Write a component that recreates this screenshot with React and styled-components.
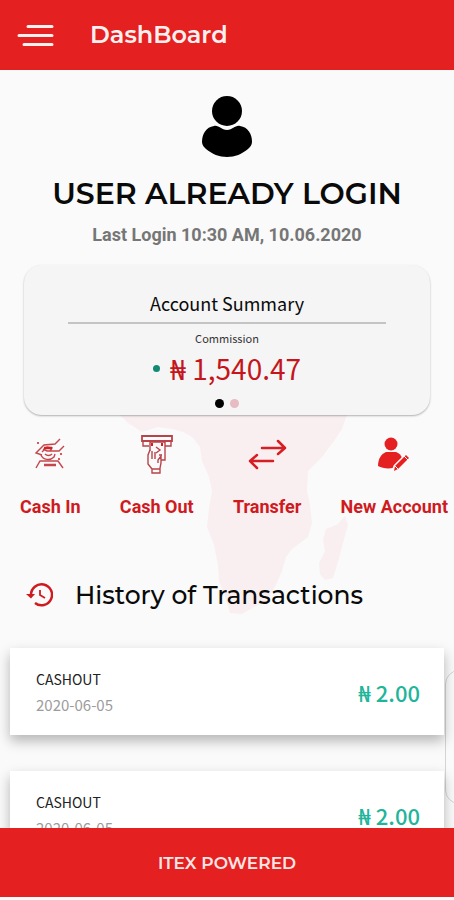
/*
 * Dashboard
 *
 * Agent landing page: profile, account summary, quick actions and history
 */

import React from 'react';
import styled, { createGlobalStyle } from 'styled-components';

const heading = "'Montserrat', 'Inter', sans-serif";
const body = "'Noto Sans CJK SC', 'Noto Sans', sans-serif";
const label = "'Roboto', sans-serif";

const red = '#e42020';

const GlobalStyle = createGlobalStyle`
  * {
    box-sizing: border-box;
  }
  body {
    margin: 0;
    background: #fafafa;
    color: #0a0a0a;
  }
  h1, h2, p, ul {
    margin: 0;
    padding: 0;
  }
  button {
    border: 0;
    padding: 0;
    background: none;
    cursor: pointer;
  }
  svg {
    display: block;
  }
`;

const Page = styled.div`
  display: flex;
  flex-direction: column;
  height: 100vh;
  padding-bottom: 3px;
  overflow: hidden;
`;

const Header = styled.header`
  display: flex;
  align-items: center;
  flex: none;
  gap: 36px;
  height: 70px;
  padding: 0 16px;
  background: ${red};
`;

const HeaderTitle = styled.div`
  font: 600 24px/32px ${heading};
  color: #fff0f0;
`;

const Main = styled.main`
  position: relative;
  flex: 1;
  min-height: 0;
  overflow: hidden;
`;

const Profile = styled.section`
  display: flex;
  flex-direction: column;
  align-items: center;
  padding-top: 24px;
  text-align: center;
`;

const UserName = styled.h1`
  margin-top: 16px;
  font: 600 30px/40px ${heading};
  white-space: nowrap;
`;

const LastLogin = styled.p`
  margin-top: 8px;
  font: 700 18px/26px ${label};
  color: #767676;
`;

const Summary = styled.section`
  position: relative;
  z-index: 1;
  display: flex;
  flex-direction: column;
  align-items: center;
  height: 150px;
  margin: 17px 24px 0;
  padding: 24px 44px 0;
  border-radius: 18px;
  background: #f5f5f5;
  box-shadow: 0 1px 2px rgba(0, 0, 0, 0.3);
`;

const SummaryTitle = styled.h2`
  width: 100%;
  padding-bottom: 5px;
  border-bottom: 2px solid #c4c4c4;
  font: 400 18px/28px ${body};
  text-align: center;
`;

const SummaryLabel = styled.p`
  margin-top: 4px;
  font: 400 11px/20px ${body};
  color: #333;
`;

const Amount = styled.p`
  display: flex;
  align-items: center;
  gap: 10px;
  font: 400 28px/40px ${body};
  color: #c4161c;

  &::before {
    content: '';
    width: 7px;
    height: 7px;
    border-radius: 50%;
    background: #128a72;
  }
`;

const Dots = styled.div`
  display: flex;
  gap: 6px;
  margin-top: 11px;
`;

const Dot = styled.button`
  width: 9px;
  height: 9px;
  border-radius: 50%;
  background: ${props => (props.$active ? '#000' : '#e6bcc2')};
`;

const Actions = styled.section`
  position: relative;
  display: flex;
  justify-content: space-between;
  padding: 20px 6px 0 20px;
`;

const Action = styled.button`
  position: relative;
  display: flex;
  flex-direction: column;
  align-items: center;
  gap: 22px;
  font: 700 18px/20px ${label};
  color: #cf1a1f;
  white-space: nowrap;
`;

// sits behind the actions and the history title
const Map = styled.svg`
  position: absolute;
  top: 0;
  left: 50%;
  margin-left: -107px;
  fill: #f9eff0;
`;

const HistoryHeader = styled.div`
  position: relative;
  display: flex;
  align-items: center;
  gap: 22px;
  margin-top: 58px;
  padding: 0 26px;
`;

const HistoryTitle = styled.h2`
  font: 500 25px/40px ${heading};
`;

const List = styled.ul`
  position: relative;
  z-index: 1;
  display: flex;
  flex-direction: column;
  gap: 36px;
  margin-top: 33px;
  padding: 0 10px;
  list-style: none;
`;

const Item = styled.li`
  display: flex;
  align-items: center;
  justify-content: space-between;
  height: 87px;
  padding: 0 24px 0 26px;
  background: #fff;
  box-shadow: 0 6px 12px rgba(0, 0, 0, 0.28);
`;

const ItemName = styled.div`
  font: 400 14px/26px ${body};
  color: #222;
`;

const ItemDate = styled.div`
  font: 400 15px/26px ${body};
  color: #9c9c9c;
`;

const ItemAmount = styled.div`
  font: 500 22px/32px ${body};
  color: #1fb59b;
`;

const EdgeTab = styled.div`
  position: absolute;
  right: -20px;
  bottom: 24px;
  width: 29px;
  height: 134px;
  border: 1px solid #d4d4d4;
  border-radius: 14px;
  background: #fafafa;
`;

const Footer = styled.footer`
  flex: none;
  height: 69px;
  background: ${red};
  font: 600 17px/70px ${heading};
  color: #ffe6e6;
  text-align: center;
`;

const MenuIcon = () => (
  <svg width="38" height="24" viewBox="0 0 38 24" stroke="#fff0f0" strokeWidth="3" strokeLinecap="round">
    <path d="M12 3.500H36M3 12.500H36M8 21.500H36" />
  </svg>
);

const UserIcon = () => (
  <svg width="52" height="64" viewBox="0 0 52 64">
    <circle cx="26" cy="17" r="15" />
    <path d="M13 32c5-1 7 4 13 4s8-5 13-4c8 1 12 8 12 16 0 3-2 5-4 7-6 5-13 8-21 8s-15-3-21-8c-2-2-4-4-4-7 0-8 4-15 12-16z" />
  </svg>
);

const CashInIcon = () => (
  <svg width="34" height="40" viewBox="0 0 34 40" fill="none" stroke="#c4474d" strokeWidth="1.400">
    <path d="M27 4l-5 5-11 1-8 8 6 2" />
    <path d="M31 11l-5 5H14l-4-2M9 17l5-5 5 1-2 3" />
    <path d="M8 20c2 5 9 6 13 2l1-3M12 19c2 2 5 2 7 0" />
    <path d="M3 33l4-7h18l5 7" />
    <path d="M11 30h12" strokeWidth="2.500" />
    <path d="M11 13h8" stroke="#d61f24" strokeWidth="2.500" />
    <path d="M5 7v2M28 18v2M25 24h2" stroke="#d61f24" strokeWidth="1.500" />
  </svg>
);

const CashOutIcon = () => (
  <svg width="34" height="40" viewBox="0 0 34 40" fill="none" stroke="#b8444a" strokeWidth="1.400">
    <path d="M2 1h30v5H2z" strokeWidth="1.800" />
    <path d="M3 6v5h6M31 6v5h-6" />
    <path d="M10 7h15v18h-4M10 7v9M16 12l4 3-4 3M19 20h3" />
    <path d="M12 8v3M22 8v3" stroke="#d61f24" strokeWidth="2" />
    <path d="M10 15l-2 5v9l4 5v4h8v-5l1-5v-7l-3 4v3M12 34h8M12 16v8M15 17v7" />
  </svg>
);

const TransferIcon = () => (
  <svg width="40" height="40" viewBox="0 0 40 40" fill="none" stroke="#d61f24" strokeWidth="2.500" strokeLinecap="round" strokeLinejoin="round">
    <path d="M15 13H38M31 6l7 7-7 6M26 26H3M10 20l-7 6 7 7" />
  </svg>
);

const NewAccountIcon = () => (
  <svg width="34" height="40" viewBox="0 0 34 40" fill={red}>
    <circle cx="14" cy="9" r="6.500" />
    <path d="M1 31c0-7 3-12 8-14h10c3 1 5 3 6 6L16 33c-6 1-11 0-15-2z" />
    <path d="M16 36l2-5L29 20l3 3-11 11z" stroke="#fafafa" strokeWidth="3" strokeLinejoin="round" />
    <path d="M17 36l1-5L29 20l3 3-11 11z" />
    <path d="M27 21l4 4M18 31l3 3" stroke="#fafafa" />
  </svg>
);

const HistoryIcon = () => (
  <svg width="27" height="28" viewBox="0 0 27 28" fill="none" stroke="#cf1a1f" strokeWidth="2.500">
    <path d="M5 14a10.500 10.500 0 1 1 4 8" />
    <path d="M0 13h9l-4 4.500z" fill="#cf1a1f" stroke="none" />
    <path d="M14 9v5l5 3" strokeWidth="1.800" />
  </svg>
);

const actions = [
  { name: 'Cash In', icon: <CashInIcon /> },
  { name: 'Cash Out', icon: <CashOutIcon /> },
  { name: 'Transfer', icon: <TransferIcon /> },
  { name: 'New Account', icon: <NewAccountIcon /> },
];

const transactions = [
  { id: 1, name: 'CASHOUT', date: '2020-06-05', amount: '2.00' },
  { id: 2, name: 'CASHOUT', date: '2020-06-05', amount: '2.00' },
];

export default function App() {
  return (
    <Page>
      <GlobalStyle />
      <Header>
        <button aria-label="Menu"><MenuIcon /></button>
        <HeaderTitle>DashBoard</HeaderTitle>
      </Header>
      <Main>
        <Profile>
          <UserIcon />
          <UserName>USER ALREADY LOGIN</UserName>
          <LastLogin>Last Login 10:30 AM, 10.06.2020</LastLogin>
        </Profile>
        <Summary>
          <SummaryTitle>Account Summary</SummaryTitle>
          <SummaryLabel>Commission</SummaryLabel>
          <Amount>₦ 1,540.47</Amount>
          <Dots>
            <Dot $active aria-label="Commission" />
            <Dot aria-label="Next account" />
          </Dots>
        </Summary>
        <Actions>
          <Map width="230" height="200" viewBox="0 0 230 200">
            <path d="M0 0L8 8 22 17 38 12 52 14 63 17 72 22 80 32 82 46 89 62 92 76 89 94 87 112 94 130 98 150 99 166 105 182 110 198 122 199 134 192 146 186 156 170 162 156 166 142 172 134 188 122 192 108 190 90 187 76 188 56 202 42 214 26 222 14 227 0z" />
            <path d="M225 101l-7 8-12 5-3 11 2 11-6 12 1 11 5 6 8-2 5-16 5-19 5-18z" />
          </Map>
          {actions.map(action => (
            <Action key={action.name}>
              {action.icon}
              {action.name}
            </Action>
          ))}
        </Actions>
        <HistoryHeader>
          <HistoryIcon />
          <HistoryTitle>History of Transactions</HistoryTitle>
        </HistoryHeader>
        <List>
          {transactions.map(item => (
            <Item key={item.id}>
              <div>
                <ItemName>{item.name}</ItemName>
                <ItemDate>{item.date}</ItemDate>
              </div>
              <ItemAmount>₦ {item.amount}</ItemAmount>
            </Item>
          ))}
        </List>
        <EdgeTab />
      </Main>
      <Footer>ITEX POWERED</Footer>
    </Page>
  );
}
